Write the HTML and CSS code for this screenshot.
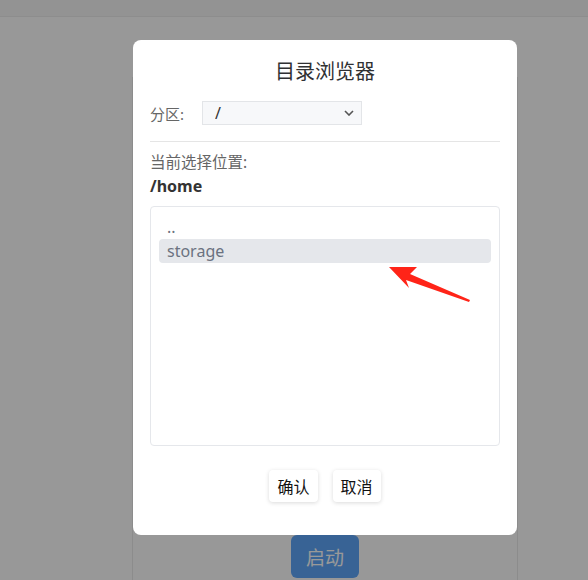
FILE: index.html
```html
<!DOCTYPE html>
<html lang="zh-CN">
<head>
    <meta charset="UTF-8">
    <meta name="viewport" content="width=device-width, initial-scale=1.0">
    <title>目录浏览器</title>
    <link rel="stylesheet" href="styles.css">
</head>
<body>
    <div class="topbar"></div>
    <div class="page">
        <div class="panel">
            <button class="start">启动</button>
        </div>
    </div>

    <div class="overlay">
        <div class="dialog">
            <h2 class="dialog-title">目录浏览器</h2>
            <div class="field">
                <label for="part">分区:</label>
                <select id="part" class="picker">
                    <option>/</option>
                </select>
            </div>
            <hr class="divider">
            <p class="label">当前选择位置:</p>
            <p class="path">/home</p>
            <ul class="dirs">
                <li class="dir">..</li>
                <li class="dir active">storage</li>
            </ul>
            <div class="actions">
                <button class="btn">确认</button>
                <button class="btn">取消</button>
            </div>

            <!-- annotation arrow -->
            <svg class="pointer" width="90" height="45" viewBox="0 0 90 45">
                <polygon points="0,1 28,1 21,8 81,34 80,36 17,14 20,22" fill="#ff2418"/>
            </svg>
        </div>
    </div>
</body>
</html>
```

FILE: styles.css
```css
body {
    margin: 0;
    padding: 0;
    height: 580px;
    overflow: hidden;
    background: #fdfdfd;
    font-family: "Noto Sans", "Noto Sans CJK SC", sans-serif;
}

.topbar {
    height: 16px;
    background: #f6f6f6;
    border-bottom: 1px solid #ececec;
}

.page {
    padding: 60px 0 0 132px;
}

.panel {
    width: 384px;
    height: 503px;
    border-left: 1px solid #eaeaea;
    border-right: 1px solid #eaeaea;
    display: flex;
    justify-content: center;
    align-items: flex-end;
}

.start {
    width: 68px;
    height: 43px;
    margin-bottom: 2px;
    background: #5ea6f8;
    color: #fff;
    border: none;
    border-radius: 6px;
    font-family: inherit;
    font-size: 19px;
}

.overlay {
    position: fixed;
    top: 0;
    left: 0;
    width: 100%;
    height: 100%;
    background: rgba(0, 0, 0, 0.4);
}

.dialog {
    position: relative;
    box-sizing: border-box;
    width: 384px;
    margin: 40px 0 0 133px;
    padding: 20px 17px 33px;
    background: #fff;
    border-radius: 8px;
}

.dialog-title {
    margin: 0;
    font-size: 20px;
    font-weight: 400;
    line-height: 24px;
    text-align: center;
    color: #303133;
}

.field {
    display: flex;
    align-items: center;
    margin-top: 17px;
    height: 24px;
}

.field label {
    width: 52px;
    font-size: 15px;
    color: #666;
}

.picker {
    appearance: none;
    width: 160px;
    height: 24px;
    padding: 0 0 0 12px;
    background: #f7f8fa url("data:image/svg+xml,%3Csvg xmlns='http://www.w3.org/2000/svg' width='10' height='6' viewBox='0 0 10 6'%3E%3Cpath d='M1 1l4 4 4-4' fill='none' stroke='%23555' stroke-width='1.6'/%3E%3C/svg%3E") no-repeat right 7px center;
    border: 1px solid #e3e5e8;
    border-radius: 0;
    font-family: inherit;
    font-size: 16px;
    color: #333;
}

.divider {
    margin: 16px 0 0;
    border: none;
    border-top: 1px solid #e5e5e5;
}

.label {
    margin: 9px 0 0;
    font-size: 15.5px;
    line-height: 22px;
    color: #666;
}

.path {
    margin: 2px 0 0;
    font-size: 16px;
    font-weight: 700;
    line-height: 22px;
    color: #333;
}

.dirs {
    list-style: none;
    box-sizing: border-box;
    height: 240px;
    margin: 9px 0 0;
    padding: 8px;
    border: 1px solid #e5e7eb;
    border-radius: 4px;
}

.dir {
    height: 24px;
    line-height: 24px;
    padding: 0 8px;
    font-size: 16px;
    color: #6b7280;
    border-radius: 4px;
}

.dir.active {
    background: #e5e7eb;
}

.actions {
    display: flex;
    justify-content: center;
    gap: 15px;
    margin-top: 24px;
}

.btn {
    height: 32px;
    padding: 0 8px;
    background: #fff;
    border: none;
    border-radius: 4px;
    box-shadow: 0 1px 4px rgba(0, 0, 0, 0.15);
    font-family: inherit;
    font-size: 16px;
    color: #111;
}

.pointer {
    position: absolute;
    left: 256px;
    top: 226px;
}
```
